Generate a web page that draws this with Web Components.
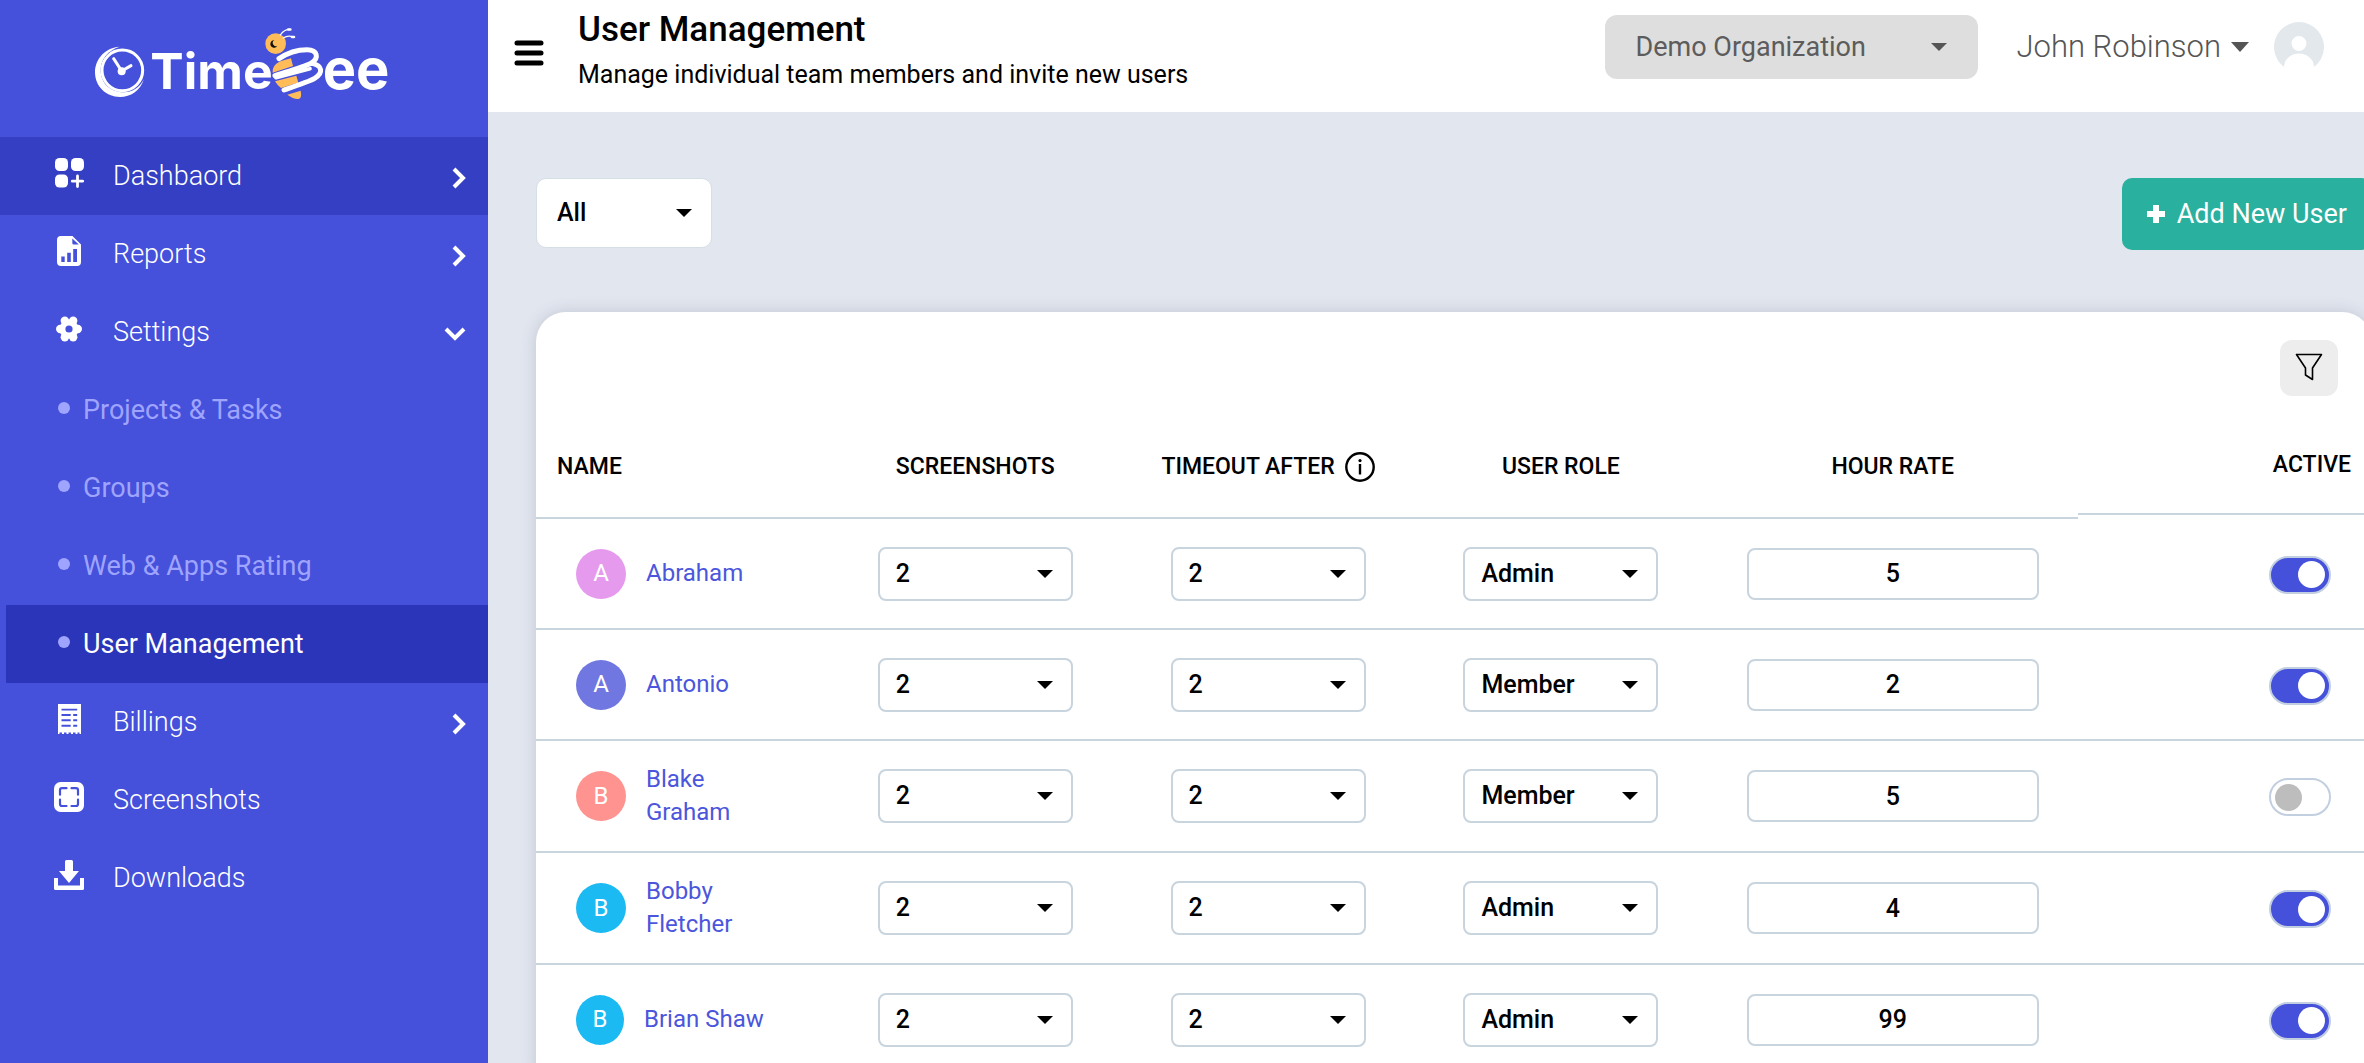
<!DOCTYPE html>
<html lang="en">
<head>
<meta charset="utf-8">
<title>TimeBee - User Management</title>
<style>
  html, body { margin: 0; height: 100%; }
  body { font-family: Roboto, "Liberation Sans", sans-serif; color: #000; overflow: hidden; }
</style>
</head>
<body>
<tb-app></tb-app>

<script>
const define = (name, html, setup) => {
  const template = document.createElement('template');
  template.innerHTML = `<style>*,*::before,*::after{box-sizing:border-box}</style>${html}`;
  customElements.define(name, class extends HTMLElement {
    connectedCallback() {
      if (this.shadowRoot) return;
      this.attachShadow({ mode: 'open' }).append(template.content.cloneNode(true));
      if (setup) setup(this, this.shadowRoot);
    }
  });
};

/* ---------- icons ---------- */
const ICONS = {
  dashboard: `<svg width="30" height="30" viewBox="0 0 30 30" fill="currentColor"><rect x="1" width="13" height="13" rx="4.5"/><rect x="17" width="13" height="13" rx="4.5"/><rect x="1" y="16.500" width="13" height="13" rx="4.500"/><path d="M23.500 18v10.500M18.300 23.200h10.400" stroke="currentColor" stroke-width="2.800" stroke-linecap="round"/></svg>`,
  reports: `<svg width="30" height="30" viewBox="0 0 30 30"><path fill="currentColor" fill-rule="evenodd" d="M7 0h11.500L27 8.500V26a4 4 0 0 1-4 4H7a4 4 0 0 1-4-4V4a4 4 0 0 1 4-4zM18.300 2.500v4.500a1.500 1.500 0 0 0 1.500 1.500h5zM7.300 20.500v5.500h3.400v-5.500zM13.200 16.700V26h3.600v-9.300zM19.200 13v13h3.800V13z"/></svg>`,
  settings: `<svg width="30" height="30" viewBox="0 0 30 30"><g fill="currentColor"><circle cx="19.200" cy="6.800" r="4.200"/><circle cx="10.800" cy="6.800" r="4.200"/><circle cx="6.200" cy="15" r="4.200"/><circle cx="10.800" cy="23.200" r="4.200"/><circle cx="19.200" cy="23.200" r="4.200"/><circle cx="23.800" cy="15" r="4.200"/></g><circle cx="15" cy="15" r="6.600" fill="none" stroke="currentColor" stroke-width="6"/></svg>`,
  billings: `<svg width="30" height="30" viewBox="0 0 30 30"><path fill="currentColor" fill-rule="evenodd" d="M4 0h23v30h-1.500v-1.500h-2V30h-2v-1.500h-2.500V30h-2v-1.500h-2.500V30h-2v-1.500H10V30H8v-1.500H5.500V30H4zM7.500 4.800v1.800h15.700V4.800zM7.500 10v2h9.200v-2zM19.200 10v2h4v-2zM7.500 15.200v2h9.200v-2zM19.200 15.200v2h4v-2zM7.500 20.800v2h9.200v-2zM19.200 20.800v2h4v-2z"/></svg>`,
  screenshots: `<svg width="30" height="30" viewBox="0 0 30 30"><rect width="30" height="30" rx="6.500" fill="currentColor"/><path fill="none" stroke="var(--cut)" stroke-width="2.200" stroke-linecap="round" d="M12.500 6.200H8a2 2 0 0 0-2 2v4.500M17.500 6.200H22a2 2 0 0 1 2 2v4.500M12.500 24H8a2 2 0 0 1-2-2v-4.500M17.500 24H22a2 2 0 0 0 2-2v-4.500"/></svg>`,
  downloads: `<svg width="30" height="30" viewBox="0 0 30 30" fill="currentColor"><path d="M11 1.500Q11 0 12.500 0h5Q19 0 19 1.500V11h6L15 23 5 11h6z"/><path d="M0 18h4v7.500h22V18h4v10.500q0 1.500-1.500 1.500h-27Q0 30 0 28.500z"/></svg>`,
  right: `<svg width="14" height="22" viewBox="0 0 14 22"><path d="M2 2l9 9-9 9" fill="none" stroke="currentColor" stroke-width="4"/></svg>`,
  down: `<svg width="22" height="14" viewBox="0 0 22 14"><path d="M2 2l9 9 9-9" fill="none" stroke="currentColor" stroke-width="4"/></svg>`,
  menu: `<svg width="30" height="26" viewBox="0 0 30 26"><path d="M3 3h24M3 13h24M3 23h24" stroke="currentColor" stroke-width="5" stroke-linecap="round"/></svg>`,
  caret: `<svg width="16" height="8" viewBox="0 0 16 8"><path d="M0 0h16L8 8z" fill="currentColor"/></svg>`,
  bigcaret: `<svg width="18" height="10" viewBox="0 0 18 10"><path d="M0 0h18L9 10z" fill="currentColor"/></svg>`,
  plus: `<svg width="20" height="20" viewBox="0 0 20 20"><path d="M10 1v18M1 10h18" stroke="currentColor" stroke-width="6"/></svg>`,
  info: `<svg width="30" height="30" viewBox="0 0 30 30"><circle cx="15" cy="15" r="13.700" fill="none" stroke="currentColor" stroke-width="2.400"/><path d="M15 12v10.500" stroke="currentColor" stroke-width="2.400"/><circle cx="15" cy="8.600" r="1.600" fill="currentColor"/></svg>`,
  filter: `<svg width="28" height="28" viewBox="0 0 28 28"><path d="M1.500 1.500h25L17.500 15v11.500L10.500 22v-7z" fill="none" stroke="currentColor" stroke-width="1.600" stroke-linejoin="round"/></svg>`,
  person: `<svg width="50" height="50" viewBox="0 0 50 50"><path fill="#e2e8ec" fill-rule="evenodd" d="M10 45A25 25 0 1 1 40 45A15 13.500 0 0 0 10 45zM32.500 21.500a7.500 7.500 0 1 0-15 0a7.500 7.500 0 1 0 15 0z"/></svg>`
};
define('tb-icon', `<style>:host{display:block;flex:none;line-height:0}svg{display:block}</style><span></span>`,
  (host, root) => { root.querySelector('span').innerHTML = ICONS[host.getAttribute('name')].replace('<svg', '<svg aria-hidden="true"'); });

/* ---------- brand ---------- */
define('tb-logo', `
<style>
  :host { display: flex; justify-content: center; padding: 10px 0 17px; }
  svg { display: block; margin-right: 8px; }
  text { font-family: Inter, "Liberation Sans", sans-serif; font-weight: 700; fill: #fff; }
</style>
<svg width="320" height="110" viewBox="0 0 960 330" role="img" aria-label="TimeBee">
  <path fill="#fff" fill-rule="evenodd" d="M119 110C78 112 45 145 45 187C45 229 78 261 120 261C152 261 180 243 192 208C178 234 156 247 131 247C92 247 62 221 62 181C62 147 84 121 119 110z"/>
  <circle cx="127" cy="181" r="61" fill="none" stroke="#fff" stroke-width="9"/>
  <path d="M101 146L125 183L153 167" fill="none" stroke="#fff" stroke-width="9" stroke-linecap="round"/>
  <circle cx="125" cy="184" r="12" fill="#fff"/>
  <text x="211" y="237" font-size="150">Time</text>
  <text x="728" y="237" font-size="168">ee</text>
  <g fill="#ffbc58">
    <path d="M578 186C577 170 590 158 603 153L633 145L639 168L578 188z"/>
    <path d="M585 214L649 197L655 218L603 234Q592 226 585 214z"/>
    <path d="M622 254L662 242Q666 262 658 266Q644 270 622 254z"/>
    <circle cx="587" cy="101" r="31"/>
  </g>
  <path d="M583 91A11 11 0 1 0 592 107A8 8 0 0 1 583 91z" fill="#111"/>
  <g fill="none" stroke="#fff" stroke-linecap="round">
    <path d="M601 75Q612 58 630 58" stroke-width="4"/><path d="M610 84Q624 75 640 81" stroke-width="4"/>
    <path d="M625 58.500h6M636 81h6" stroke-width="8"/>
    <path stroke-width="15" d="M597 146C624 127 655 119 681 119C714 119 716 144 696 158C680 169 640 179 585 197M696 160C728 166 730 190 704 205C686 215 650 227 612 240"/>
    <path stroke-width="11" d="M588 203L690 176"/>
  </g>
</svg>`);

/* ---------- sidebar ---------- */
define('tb-nav-item', `
<style>
  :host { display: block; color: #fff; --cut: #4550db; }
  a { display: flex; align-items: center; height: 78px; padding: 0 22px 0 54px; gap: 29px;
      color: inherit; text-decoration: none; font-size: 27px; line-height: 36px; font-weight: 300; }
  .label { flex: 1; }
  .lead { padding-bottom: 6px; }
  .trail { padding-top: 4px; }
  .dot { display: none; width: 12px; height: 12px; margin-bottom: 4px; border-radius: 50%; background: #9fa4ff; }
  :host([current]) a { background: #353fc3; }
  :host([sub]) { margin-left: 6px; color: #9fa4ff; }
  :host([sub]) a { padding-left: 52px; gap: 13px; font-weight: 400; }
  :host([sub]) .dot { display: block; }
  :host([sub][current]) { color: #fff; }
  :host([sub][current]) a { background: #2b35b9; }
</style>
<a href="#"><span class="dot"></span><span class="label"><slot></slot></span></a>`,
(host, root) => {
  const a = root.querySelector('a');
  if (host.hasAttribute('icon')) a.insertAdjacentHTML('afterbegin', `<tb-icon class="lead" name="${host.getAttribute('icon')}"></tb-icon>`);
  if (host.hasAttribute('arrow')) a.insertAdjacentHTML('beforeend', `<tb-icon class="trail" name="${host.getAttribute('arrow')}"></tb-icon>`);
});

define('tb-sidebar', `
<style>
  :host { display: block; width: 488px; flex: none; background: #4550db; }
  nav { display: flex; flex-direction: column; }
</style>
<tb-logo></tb-logo>
<nav aria-label="Main">
  <tb-nav-item icon="dashboard" arrow="right" current>Dashbaord</tb-nav-item>
  <tb-nav-item icon="reports" arrow="right">Reports</tb-nav-item>
  <tb-nav-item icon="settings" arrow="down">Settings</tb-nav-item>
  <tb-nav-item sub>Projects &amp; Tasks</tb-nav-item>
  <tb-nav-item sub>Groups</tb-nav-item>
  <tb-nav-item sub>Web &amp; Apps Rating</tb-nav-item>
  <tb-nav-item sub current>User Management</tb-nav-item>
  <tb-nav-item icon="billings" arrow="right">Billings</tb-nav-item>
  <tb-nav-item icon="screenshots">Screenshots</tb-nav-item>
  <tb-nav-item icon="downloads">Downloads</tb-nav-item>
</nav>`);

/* ---------- form controls ---------- */
define('tb-select', `
<style>
  :host { display: grid; width: 195px; height: 54px; margin: auto; }
  select, tb-icon { grid-area: 1 / 1; }
  select { appearance: none; width: 100%; height: 100%; margin: 0; padding: 0 48px 0 16px; border: 2px solid #c8d4de;
           border-radius: 8px; background: #fff; color: #000; font: 500 25px/32px Roboto, sans-serif; }
  tb-icon { justify-self: end; align-self: center; margin-right: 20px; pointer-events: none; }
  :host([kind=filter]) { width: 176px; height: 70px; margin: 0; }
  :host([kind=filter]) select { border: 1px solid #d6dee6; border-radius: 10px; padding-left: 20px; }
  :host([kind=org]) { width: 373px; height: 64px; margin: 0; color: #555; }
  :host([kind=org]) select { border: 0; border-radius: 12px; padding-left: 31px; background: #dedede; color: #5c5c5c; font-weight: 400; font-size: 27px; }
  :host([kind=org]) tb-icon { margin-right: 31px; }
</style>
<select></select><tb-icon name="caret"></tb-icon>`,
(host, root) => {
  const select = root.querySelector('select');
  select.setAttribute('aria-label', host.getAttribute('label'));
  const value = host.getAttribute('value');
  for (const text of host.getAttribute('options').split('|')) select.add(new Option(text, text, text === value, text === value));
});

define('tb-toggle', `
<style>
  :host { display: block; width: 62px; height: 38px; }
  input { appearance: none; display: flex; align-items: center; width: 100%; height: 100%; margin: 0; padding: 0 4px;
          border: 2px solid #c2cfe0; border-radius: 19px; background: #fff; }
  input::before { content: ""; width: 27px; height: 27px; border-radius: 50%; background: #bdbdbd; }
  input:checked { justify-content: flex-end; background: #4550db; }
  input:checked::before { background: #fff; }
</style>
<input type="checkbox" role="switch">`,
(host, root) => {
  const input = root.querySelector('input');
  input.checked = host.hasAttribute('on');
  input.setAttribute('aria-label', host.getAttribute('label'));
});

/* ---------- top bar ---------- */
define('tb-topbar', `
<style>
  :host { display: flex; align-items: flex-start; height: 112px; padding: 0 40px 0 26px; background: #fff; }
  button { border: 0; padding: 0; background: none; color: inherit; font: inherit; cursor: pointer; }
  .menu { margin: 40px 34px 0 0; }
  .titles { flex: 1; display: flex; flex-direction: column; gap: 8px; padding-top: 9px; }
  h1 { margin: 0; font-size: 35px; line-height: 42px; font-weight: 500; }
  p { margin: 0; font-size: 25px; line-height: 32px; }
  .right { display: flex; align-items: center; gap: 39px; height: 94px; }
  .user { display: flex; align-items: center; color: #555; }
  .name { font-size: 31px; line-height: 40px; font-weight: 300; margin-right: 10px; }
  .user tb-icon + tb-icon { margin-left: 25px; }
</style>
<button class="menu" aria-label="Toggle menu"><tb-icon name="menu"></tb-icon></button>
<div class="titles"><h1>User Management</h1><p>Manage individual team members and invite new users</p></div>
<div class="right">
  <tb-select kind="org" label="Organization" options="Demo Organization" value="Demo Organization"></tb-select>
  <button class="user"><span class="name">John Robinson</span><tb-icon name="bigcaret"></tb-icon><tb-icon name="person"></tb-icon></button>
</div>`);

/* ---------- users table ---------- */
const USERS = [
  { name: 'Abraham', color: '#e59aee', role: 'Admin', rate: 5, on: true },
  { name: 'Antonio', color: '#7077e0', role: 'Member', rate: 2, on: true },
  { name: 'Blake Graham', color: '#ff9390', role: 'Member', rate: 5, on: false, wrap: true },
  { name: 'Bobby Fletcher', color: '#1bbaf2', role: 'Admin', rate: 4, on: true, wrap: true },
  { name: 'Brian Shaw', color: '#1bbaf2', role: 'Admin', rate: 99, on: true }
];
define('tb-user-table', `
<style>
  :host { display: block; background: #fff; border-radius: 30px 30px 0 0; box-shadow: 0 0 16px rgba(60, 75, 100, .2); }
  .tools { display: flex; justify-content: flex-end; padding: 28px 34px 19px; }
  .tools button { display: grid; place-items: center; width: 58px; height: 56px; padding: 0 0 2px; border: 0; border-radius: 12px; background: #ededed; color: #000; }
  table { width: 100%; table-layout: fixed; border-collapse: separate; border-spacing: 0; }
  col { width: 15.95%; } col.rate { width: 20.2%; } col.active { width: 16%; }
  th { padding: 0; vertical-align: top; font-weight: 500; font-size: 23px; line-height: 30px; }
  th div { display: flex; align-items: center; justify-content: center; gap: 10px; height: 104px; padding: 2px 21px 0; border-bottom: 2px solid #c8d4de; }
  th:first-child div { justify-content: flex-start; }
  th:last-child div { justify-content: flex-end; height: 100px; }
  td { height: 111px; padding: 0; border-bottom: 2px solid #c8d4de; vertical-align: middle; }
  .person { display: flex; align-items: center; gap: 20px; padding: 22px 80px 22px 40px; color: #4b56dc; font-size: 24px; line-height: 33px; }
  .person a { color: inherit; text-decoration: none; white-space: nowrap; }
  .person a.wrap { width: min-content; white-space: normal; }
  .avatar { flex: 0 1 50px; min-width: 48px; display: grid; place-items: center; height: 50px; border-radius: 50%; color: #fff; }
  .rate-input { display: block; width: 292px; height: 52px; margin: auto; padding: 0; border: 2px solid #c8d4de; border-radius: 8px;
    text-align: center; font: 500 25px/32px Roboto, sans-serif; color: #000; background: #fff; }
  tb-toggle { margin: 2px 41px 0 auto; }
</style>
<div class="tools"><button aria-label="Filter"><tb-icon name="filter"></tb-icon></button></div>
<table>
  <colgroup><col><col><col><col><col class="rate"><col class="active"></colgroup>
  <thead><tr>
    <th scope="col"><div>NAME</div></th><th scope="col"><div>SCREENSHOTS</div></th>
    <th scope="col"><div>TIMEOUT AFTER<tb-icon name="info"></tb-icon></div></th>
    <th scope="col"><div>USER ROLE</div></th><th scope="col"><div>HOUR RATE</div></th><th scope="col"><div>ACTIVE</div></th>
  </tr></thead>
  <tbody></tbody>
</table>`,
(host, root) => {
  root.querySelector('tbody').innerHTML = USERS.map(u => `<tr>
    <td><div class="person"><span class="avatar" style="background:${u.color}">${u.name[0]}</span><a href="#"${u.wrap ? ' class="wrap"' : ''}>${u.name}</a></div></td>
    <td><tb-select label="Screenshots for ${u.name}" options="1|2|3" value="2"></tb-select></td>
    <td><tb-select label="Timeout for ${u.name}" options="1|2|3" value="2"></tb-select></td>
    <td><tb-select label="Role of ${u.name}" options="Admin|Member" value="${u.role}"></tb-select></td>
    <td><input class="rate-input" type="text" inputmode="numeric" aria-label="Hour rate of ${u.name}" value="${u.rate}"></td>
    <td><tb-toggle label="${u.name} is active"${u.on ? ' on' : ''}></tb-toggle></td></tr>`).join('');
});

define('tb-users-page', `
<style>
  :host { display: flex; flex-direction: column; gap: 62px; padding: 66px 0 0 48px; margin-right: -8px; }
  .bar { display: flex; justify-content: space-between; align-items: flex-start; }
  .add { display: flex; align-items: center; gap: 11px; height: 72px; padding: 0 25px 0 24px; border: 0; border-radius: 10px;
         background: #29b09e; color: #fff; font: 400 27px/36px Roboto, sans-serif; }
</style>
<div class="bar">
  <tb-select kind="filter" label="Show users" options="All|Active|Inactive" value="All"></tb-select>
  <button class="add"><tb-icon name="plus"></tb-icon>Add New User</button>
</div>
<tb-user-table></tb-user-table>`);

define('tb-app', `
<style>
  :host { display: flex; height: 100vh; }
  main { flex: 1; min-width: 0; background: #e2e6ef; overflow: hidden auto; scrollbar-width: none; }
</style>
<tb-sidebar></tb-sidebar>
<main><tb-topbar></tb-topbar><tb-users-page></tb-users-page></main>`);
</script>
</body>
</html>
